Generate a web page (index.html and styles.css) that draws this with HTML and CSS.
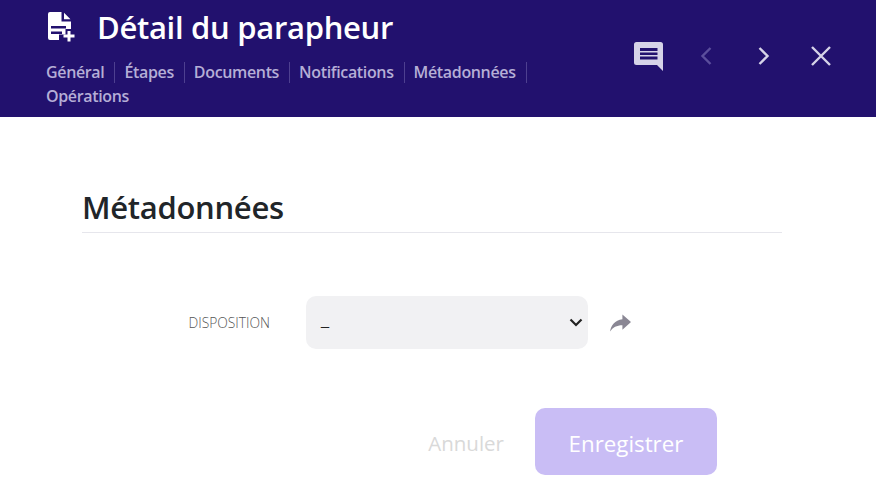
FILE: index.html
```html
<!DOCTYPE html>
<html lang="fr">
<head>
    <meta charset="UTF-8">
    <meta name="viewport" content="width=device-width, initial-scale=1.0">
    <title>Détail du parapheur</title>
    <link rel="stylesheet" href="styles.css">
</head>
<body>
    <header class="top-bar">
        <div class="top-left">
            <div class="title-row">
                <svg class="title-icon" viewBox="0 0 28 30" width="28" height="30">
                    <path fill="#fff" fill-rule="evenodd" d="M3 0H14.500V9.500H24V17H18.500V22.500H12V28H3Q1 28 1 26V2Q1 0 3 0ZM17 .8L23.500 7.200H17ZM4 14V16.500H19V14ZM4 19.500V22H15V19.500Z"/>
                    <path fill="#fff" d="M20.500 19H23.500V22.500H27.500V25.500H23.500V29.500H20.500V25.500H16.500V22.500H20.500Z"/>
                </svg>
                <h1 class="title">Détail du parapheur</h1>
            </div>
            <nav class="tabs">
                <a class="tab">Général</a>
                <a class="tab">Étapes</a>
                <a class="tab">Documents</a>
                <a class="tab">Notifications</a>
                <a class="tab">Métadonnées</a>
                <a class="tab last">Opérations</a>
            </nav>
        </div>
        <div class="top-actions">
            <svg class="action comment" viewBox="0 0 29 29" width="29" height="29">
                <path fill="#d6d3e8" fill-rule="evenodd" d="M2.500 0H26.500Q29 0 29 2.500V29L23 23H2.500Q0 23 0 20.500V2.500Q0 0 2.500 0ZM6 6V9H23.500V6ZM6 10.500V13H23.500V10.500ZM6 14.500V17.500H23.500V14.500Z"/>
            </svg>
            <svg class="action prev" viewBox="0 0 12 20" width="12" height="20">
                <path fill="none" stroke="#5b4e9c" stroke-width="2.400" d="M10.500 2L2.500 10L10.500 18"/>
            </svg>
            <svg class="action next" viewBox="0 0 12 20" width="12" height="20">
                <path fill="none" stroke="#d6d3e8" stroke-width="2.400" d="M1.500 2L9.500 10L1.500 18"/>
            </svg>
            <svg class="action close" viewBox="0 0 20 20" width="20" height="20">
                <path fill="none" stroke="#d6d3e8" stroke-width="2.400" d="M1 1L19 19M19 1L1 19"/>
            </svg>
        </div>
    </header>

    <main class="content">
        <h2 class="section-title">Métadonnées</h2>
        <div class="form-row">
            <label class="field-label" for="disposition">DISPOSITION</label>
            <div class="select-box" id="disposition">
                <span class="select-value">–</span>
                <svg viewBox="0 0 14 9" width="14" height="9">
                    <path fill="none" stroke="#222" stroke-width="2.200" d="M1.500 1.500L7 7L12.500 1.500"/>
                </svg>
            </div>
            <svg class="share" viewBox="0 0 22 18" width="21" height="18">
                <path fill="#8a8794" d="M13 0L22 8L13 16V11.300C7 11.300 3 13.500 0 18C1 11.500 5 6 13 5Z"/>
            </svg>
        </div>
        <div class="form-buttons">
            <button class="btn-cancel">Annuler</button>
            <button class="btn-save">Enregistrer</button>
        </div>
    </main>
</body>
</html>
```

FILE: styles.css
```css
body {
    margin: 0;
    padding: 0;
    height: 479px;
    overflow: hidden;
    background-color: #fff;
    font-family: "Open Sans", "Noto Sans", sans-serif;
}

.top-bar {
    display: flex;
    justify-content: space-between;
    height: 117px;
    background-color: #22116e;
}

.top-left {
    width: 500px;
    padding-left: 46px;
}

.title-row {
    display: flex;
    align-items: center;
    height: 54px;
}

.title-icon {
    margin-left: 1px;
    margin-right: 22px;
}

.title {
    margin: 0;
    font-size: 31px;
    font-weight: 600;
    color: #fff;
    letter-spacing: -0.3px;
    white-space: nowrap;
}

.tabs {
    display: flex;
    flex-wrap: wrap;
    row-gap: 3px;
    margin-top: 8px;
}

.tab {
    height: 21px;
    line-height: 21px;
    padding-right: 10px;
    margin-right: 9px;
    border-right: 1px solid #4e4090;
    font-size: 16px;
    font-weight: 600;
    letter-spacing: -0.35px;
    color: #b5aed6;
}

.tab.last {
    border-right: none;
}

.top-actions {
    display: flex;
    align-items: center;
    height: 112px;
    padding-right: 45px;
}

.comment { margin-right: 37px; }
.prev { margin-right: 46px; }
.next { margin-right: 41px; }

.content {
    padding: 0 94px 0 82px;
}

.section-title {
    margin: 69px 0 0;
    height: 46px;
    line-height: 42px;
    border-bottom: 1px solid #e6e6ec;
    font-size: 31px;
    font-weight: 600;
    letter-spacing: -0.3px;
    color: #212529;
}

.form-row {
    display: flex;
    align-items: center;
    margin-top: 63px;
}

.field-label {
    width: 188px;
    text-align: right;
    font-size: 13.800px;
    font-weight: 300;
    color: #555;
}

.select-box {
    display: flex;
    justify-content: space-between;
    align-items: center;
    box-sizing: border-box;
    width: 282px;
    height: 53px;
    margin-left: 36px;
    padding: 0 5px 0 14px;
    background-color: #f1f1f3;
    border-radius: 10px;
    color: #222;
}

.select-value {
    padding-top: 5px;
    font-size: 20px;
    font-weight: 300;
}

.share {
    margin-left: 22px;
}

.form-buttons {
    display: flex;
    justify-content: flex-end;
    align-items: center;
    margin-top: 59px;
    padding-right: 65px;
}

.btn-cancel,
.btn-save {
    border: none;
    background: none;
    font-family: inherit;
    padding: 0;
}

.btn-cancel {
    margin-right: 31px;
    padding-top: 3px;
    font-size: 20.500px;
    color: #d9d9d9;
}

.btn-save {
    width: 182px;
    height: 67px;
    padding-top: 3px;
    background-color: #c9bdf5;
    border-radius: 10px;
    font-size: 22.300px;
    color: #fff;
    font-weight: 500;
}
```
